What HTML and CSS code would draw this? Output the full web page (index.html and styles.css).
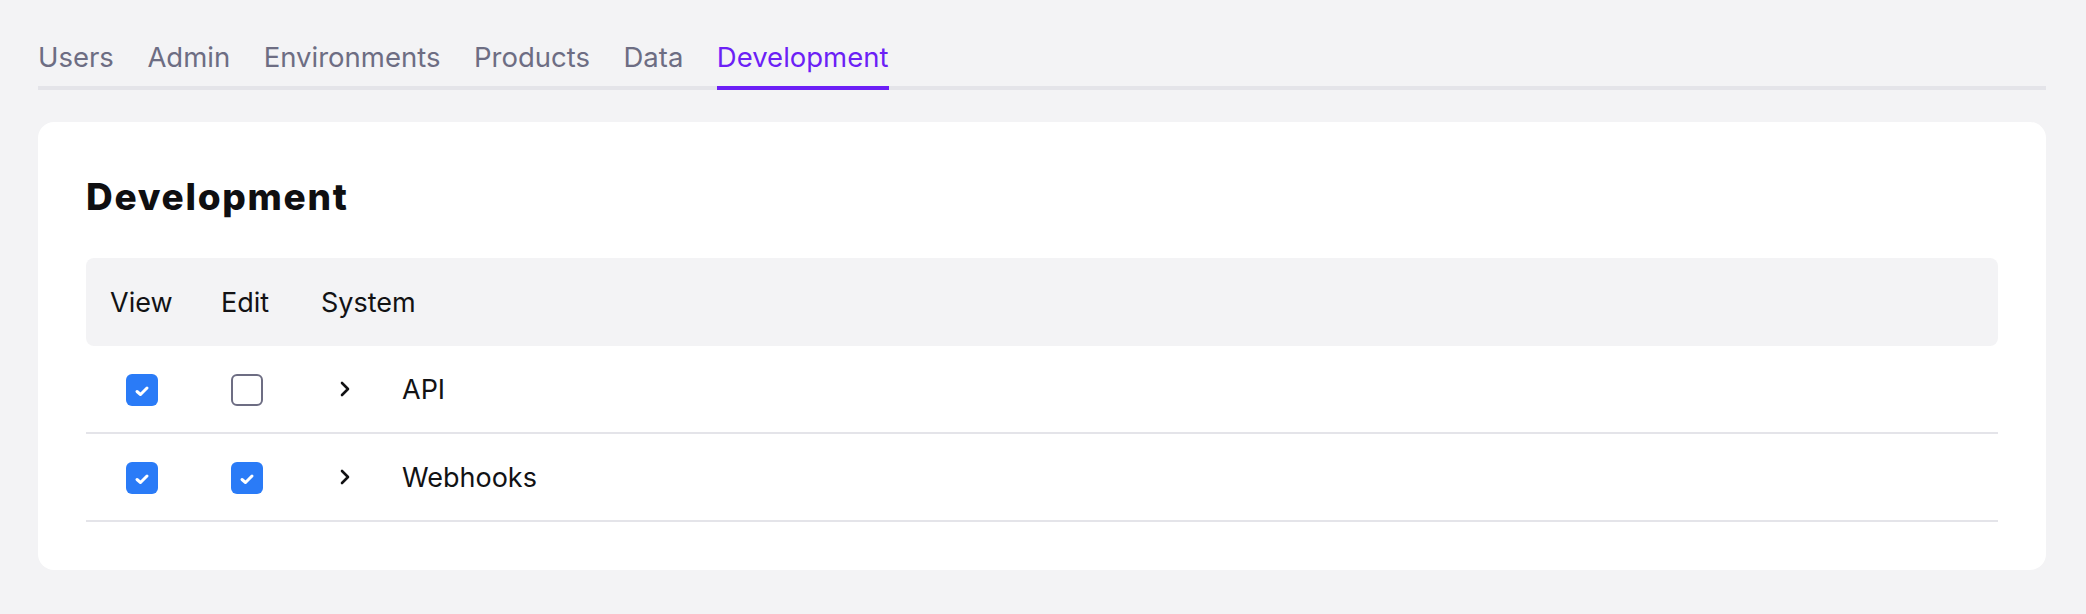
FILE: index.html
```html
<!DOCTYPE html>
<html lang="en">
<head>
    <meta charset="UTF-8">
    <title>Permissions - Development</title>
    <link rel="stylesheet" href="styles.css">
</head>
<body>
<nav class="tabs">
    <a class="tab" href="#">Users</a>
    <a class="tab" href="#">Admin</a>
    <a class="tab" href="#">Environments</a>
    <a class="tab" href="#">Products</a>
    <a class="tab" href="#">Data</a>
    <a class="tab active" href="#">Development</a>
</nav>

<div class="card">
    <h2 class="card-title">Development</h2>
    <table class="perm-table">
        <thead>
            <tr>
                <th class="col-view">View</th>
                <th class="col-edit">Edit</th>
                <th>System</th>
            </tr>
        </thead>
        <tbody>
            <tr>
                <td class="check-cell"><span class="checkbox checked"><svg viewBox="0 0 32 32"><polyline points="11,17.5 14.5,20.5 21,14"/></svg></span></td>
                <td class="check-cell"><span class="checkbox"></span></td>
                <td>
                    <div class="system">
                        <span class="chevron"><svg viewBox="0 0 12 16"><polyline points="3,2 9,8 3,14"/></svg></span>
                        <span>API</span>
                    </div>
                </td>
            </tr>
            <tr>
                <td class="check-cell"><span class="checkbox checked"><svg viewBox="0 0 32 32"><polyline points="11,17.5 14.5,20.5 21,14"/></svg></span></td>
                <td class="check-cell"><span class="checkbox checked"><svg viewBox="0 0 32 32"><polyline points="11,17.5 14.5,20.5 21,14"/></svg></span></td>
                <td>
                    <div class="system">
                        <span class="chevron"><svg viewBox="0 0 12 16"><polyline points="3,2 9,8 3,14"/></svg></span>
                        <span>Webhooks</span>
                    </div>
                </td>
            </tr>
        </tbody>
    </table>
</div>
</body>
</html>
```

FILE: styles.css
```css
body {
    margin: 0;
    padding: 37px 40px 0 38px;
    background-color: #f3f3f5;
    font-family: 'Inter', 'Noto Sans', sans-serif;
    color: #121214;
}

.tabs {
    display: flex;
    gap: 33.5px;
    border-bottom: 4px solid #e4e4e9;
}

.tab {
    display: block;
    font-size: 27.5px;
    line-height: 40px;
    padding-bottom: 9px;
    margin-bottom: -4px;
    border-bottom: 4px solid transparent;
    color: #6d6d83;
    text-decoration: none;
}

.tab.active {
    color: #6c1ff6;
    border-bottom-color: #6c1ff6;
}

.card {
    margin-top: 32px;
    background-color: white;
    border-radius: 16px;
    padding: 48px;
}

.card-title {
    margin: 0 0 34px 0;
    font-size: 37px;
    line-height: 54px;
    font-weight: 800;
    letter-spacing: 1.7px;
    color: #0f0f11;
}

.perm-table {
    width: 100%;
    table-layout: fixed;
    border-collapse: separate;
    border-spacing: 0;
    font-size: 27px;
}

.perm-table th {
    height: 88px;
    padding: 0 24px;
    background-color: #f3f3f5;
    font-weight: 400;
    text-align: left;
    white-space: nowrap;
}

/* fixed widths keep the checkboxes centred under their labels */
.perm-table .col-view {
    width: 63px;
}

.perm-table .col-edit {
    width: 52px;
}

.perm-table th:first-child {
    border-radius: 8px 0 0 8px;
}

.perm-table th:last-child {
    border-radius: 0 8px 8px 0;
}

.perm-table td {
    height: 86px;
    padding: 0 24px;
    border-bottom: 2px solid #e4e4e9;
}

.check-cell {
    text-align: center;
}

.checkbox {
    display: inline-block;
    vertical-align: middle;
    box-sizing: border-box;
    width: 32px;
    height: 32px;
    border: 2px solid #6d6d83;
    border-radius: 6px;
    background-color: white;
}

.checkbox.checked {
    border: none;
    background-color: #2a7bf7;
}

.checkbox svg {
    display: block;
    width: 32px;
    height: 32px;
    fill: none;
    stroke: white;
    stroke-width: 3;
    stroke-linecap: round;
    stroke-linejoin: round;
}

.system {
    display: flex;
    align-items: center;
    gap: 33px;
}

.chevron {
    display: flex;
    justify-content: center;
    width: 48px;
}

.chevron svg {
    width: 12px;
    height: 16px;
    fill: none;
    stroke: #121214;
    stroke-width: 2.6;
    stroke-linecap: round;
    stroke-linejoin: round;
}
```
